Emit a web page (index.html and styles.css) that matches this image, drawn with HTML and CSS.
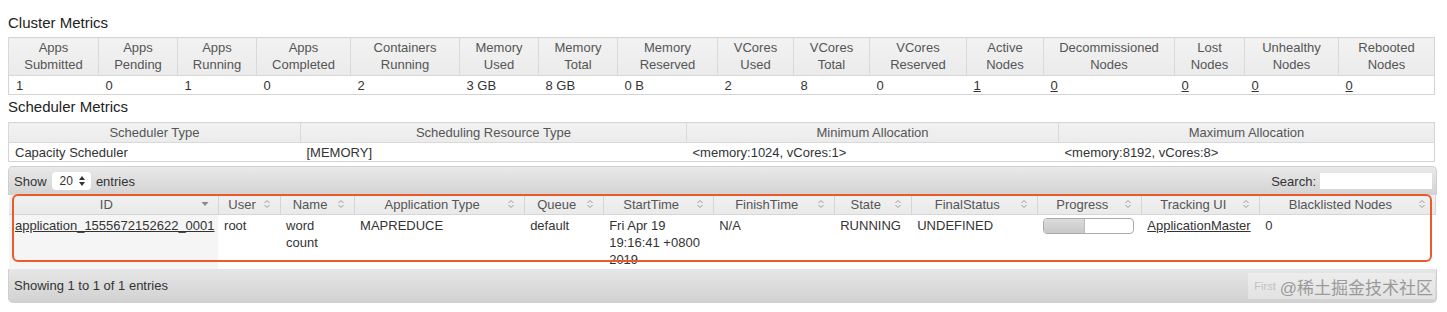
FILE: index.html
```html
<!DOCTYPE html>
<html lang="en">
<head>
<meta charset="UTF-8">
<title>All Applications</title>
<link rel="stylesheet" href="styles.css">
</head>
<body>
    <h3 class="section-title">Cluster Metrics</h3>
    <table class="metrics">
        <colgroup>
            <col style="width:90px"><col style="width:79px"><col style="width:79px"><col style="width:94px">
            <col style="width:109px"><col style="width:79px"><col style="width:79px"><col style="width:100px">
            <col style="width:76px"><col style="width:76px"><col style="width:97px"><col style="width:77px">
            <col style="width:131px"><col style="width:70px"><col style="width:94px"><col style="width:96px">
        </colgroup>
        <thead>
            <tr>
                <th>Apps Submitted</th><th>Apps Pending</th><th>Apps Running</th><th>Apps Completed</th>
                <th>Containers Running</th><th>Memory Used</th><th>Memory Total</th><th>Memory Reserved</th>
                <th>VCores Used</th><th>VCores Total</th><th>VCores Reserved</th><th>Active Nodes</th>
                <th>Decommissioned Nodes</th><th>Lost Nodes</th><th>Unhealthy Nodes</th><th>Rebooted Nodes</th>
            </tr>
        </thead>
        <tbody>
            <tr>
                <td>1</td><td>0</td><td>1</td><td>0</td><td>2</td><td>3 GB</td><td>8 GB</td><td>0 B</td>
                <td>2</td><td>8</td><td>0</td><td><a href="#">1</a></td><td><a href="#">0</a></td>
                <td><a href="#">0</a></td><td><a href="#">0</a></td><td><a href="#">0</a></td>
            </tr>
        </tbody>
    </table>

    <h3 class="section-title second">Scheduler Metrics</h3>
    <table class="metrics scheduler">
        <colgroup>
            <col style="width:292px"><col style="width:386px"><col style="width:372px"><col style="width:376px">
        </colgroup>
        <thead>
            <tr>
                <th>Scheduler Type</th><th>Scheduling Resource Type</th><th>Minimum Allocation</th><th>Maximum Allocation</th>
            </tr>
        </thead>
        <tbody>
            <tr>
                <td>Capacity Scheduler</td><td>[MEMORY]</td><td>&lt;memory:1024, vCores:1&gt;</td><td>&lt;memory:8192, vCores:8&gt;</td>
            </tr>
        </tbody>
    </table>

    <div class="apps-wrapper">
        <div class="dt-toolbar">
            <div class="dt-length">
                Show
                <span class="fake-select">20
                    <svg width="6" height="10" viewBox="0 0 6 10"><path d="M0 4 L3 0 L6 4 Z M0 6 L3 10 L6 6 Z" fill="#333"/></svg>
                </span>
                entries
            </div>
            <div class="dt-filter">Search: <span class="fake-input"></span></div>
        </div>

        <table class="apps">
            <colgroup>
                <col style="width:209px"><col style="width:62px"><col style="width:74px"><col style="width:170px">
                <col style="width:79px"><col style="width:110px"><col style="width:121px"><col style="width:77px">
                <col style="width:126px"><col style="width:104px"><col style="width:118px"><col style="width:176px">
            </colgroup>
            <thead>
                <tr>
                    <th class="sorted">ID<svg class="sort" width="8" height="10" viewBox="0 0 8 10"><path d="M0.5 3 L7.5 3 L4 7 Z" fill="#8a8a8a"/></svg></th>
                    <th>User<svg class="sort" width="8" height="10" viewBox="0 0 8 10"><path d="M1.5 4 L4 1.5 L6.5 4 M1.5 6 L4 8.5 L6.5 6" fill="none" stroke="#999" stroke-width="1"/></svg></th>
                    <th>Name<svg class="sort" width="8" height="10" viewBox="0 0 8 10"><path d="M1.5 4 L4 1.5 L6.5 4 M1.5 6 L4 8.5 L6.5 6" fill="none" stroke="#999" stroke-width="1"/></svg></th>
                    <th>Application Type<svg class="sort" width="8" height="10" viewBox="0 0 8 10"><path d="M1.5 4 L4 1.5 L6.5 4 M1.5 6 L4 8.5 L6.5 6" fill="none" stroke="#999" stroke-width="1"/></svg></th>
                    <th>Queue<svg class="sort" width="8" height="10" viewBox="0 0 8 10"><path d="M1.5 4 L4 1.5 L6.5 4 M1.5 6 L4 8.5 L6.5 6" fill="none" stroke="#999" stroke-width="1"/></svg></th>
                    <th>StartTime<svg class="sort" width="8" height="10" viewBox="0 0 8 10"><path d="M1.5 4 L4 1.5 L6.5 4 M1.5 6 L4 8.5 L6.5 6" fill="none" stroke="#999" stroke-width="1"/></svg></th>
                    <th>FinishTime<svg class="sort" width="8" height="10" viewBox="0 0 8 10"><path d="M1.5 4 L4 1.5 L6.5 4 M1.5 6 L4 8.5 L6.5 6" fill="none" stroke="#999" stroke-width="1"/></svg></th>
                    <th>State<svg class="sort" width="8" height="10" viewBox="0 0 8 10"><path d="M1.5 4 L4 1.5 L6.5 4 M1.5 6 L4 8.5 L6.5 6" fill="none" stroke="#999" stroke-width="1"/></svg></th>
                    <th>FinalStatus<svg class="sort" width="8" height="10" viewBox="0 0 8 10"><path d="M1.5 4 L4 1.5 L6.5 4 M1.5 6 L4 8.5 L6.5 6" fill="none" stroke="#999" stroke-width="1"/></svg></th>
                    <th>Progress<svg class="sort" width="8" height="10" viewBox="0 0 8 10"><path d="M1.5 4 L4 1.5 L6.5 4 M1.5 6 L4 8.5 L6.5 6" fill="none" stroke="#999" stroke-width="1"/></svg></th>
                    <th>Tracking UI<svg class="sort" width="8" height="10" viewBox="0 0 8 10"><path d="M1.5 4 L4 1.5 L6.5 4 M1.5 6 L4 8.5 L6.5 6" fill="none" stroke="#999" stroke-width="1"/></svg></th>
                    <th>Blacklisted Nodes<svg class="sort" width="8" height="10" viewBox="0 0 8 10"><path d="M1.5 4 L4 1.5 L6.5 4 M1.5 6 L4 8.5 L6.5 6" fill="none" stroke="#999" stroke-width="1"/></svg></th>
                </tr>
            </thead>
            <tbody>
                <tr>
                    <td class="sorted"><a href="#">application_1555672152622_0001</a></td>
                    <td>root</td>
                    <td>word count</td>
                    <td>MAPREDUCE</td>
                    <td>default</td>
                    <td>Fri Apr 19 19:16:41 +0800 2019</td>
                    <td>N/A</td>
                    <td>RUNNING</td>
                    <td>UNDEFINED</td>
                    <td><div class="progress"><div class="progress-fill" style="width:45%"></div></div></td>
                    <td><a href="#">ApplicationMaster</a></td>
                    <td>0</td>
                </tr>
            </tbody>
        </table>

        <div class="dt-footer">
            <span>Showing 1 to 1 of 1 entries</span>
        </div>

        <div class="highlight"></div>
        <div class="watermark"><span class="first">First</span>@稀土掘金技术社区</div>
    </div>
</body>
</html>
```

FILE: styles.css
```css
body {
    margin: 0;
    padding: 0 10px 0 8px;
    font-family: "Liberation Sans", Arial, "Noto Sans CJK SC", sans-serif;
    font-size: 13px;
    color: #333;
    background: #fff;
}

a {
    color: #333;
}

.section-title {
    font-size: 15px;
    font-weight: normal;
    line-height: 18px;
    margin: 14px 0 5px;
    color: #222;
}

.section-title.second {
    margin-top: 3px;
    margin-bottom: 6px;
}

table {
    border-collapse: collapse;
    table-layout: fixed;
    width: 1427px;
}

.metrics {
    border: 1px solid #d4d4d4;
}

.metrics th {
    background: linear-gradient(#f2f2f2, #ebebeb);
    color: #555;
    font-weight: normal;
    line-height: 17px;
    padding: 1px 4px 2px;
    border-left: 1px solid #d9d9d9;
    border-bottom: 1px solid #d9d9d9;
    text-align: center;
}

.metrics td {
    line-height: 17px;
    padding: 1px 7px 0;
    text-align: left;
    white-space: nowrap;
}

.scheduler th {
    padding: 1px 4px;
}

.scheduler td {
    padding: 1px 6px 0;
}

.apps-wrapper {
    position: relative;
    margin-top: 4px;
    width: 1429px;
}

.dt-toolbar {
    height: 28px;
    display: flex;
    align-items: center;
    justify-content: space-between;
    padding: 0 4px 0 5px;
    border: 1px solid #cfcfcf;
    border-bottom: none;
    border-radius: 5px 5px 0 0;
    background: linear-gradient(#e9e9e9, #d3d3d3);
    color: #333;
}

.dt-length {
    display: flex;
    align-items: center;
    gap: 5px;
}

.fake-select {
    display: inline-flex;
    align-items: center;
    gap: 6px;
    background: #fff;
    border-radius: 4px;
    height: 18px;
    padding: 0 6px 0 8px;
    font-size: 12px;
}

.dt-filter {
    display: flex;
    align-items: center;
    gap: 4px;
}

.fake-input {
    display: inline-block;
    width: 112px;
    height: 16px;
    background: #fff;
}

.apps {
    margin-left: 1px;
}

.apps th {
    position: relative;
    background: linear-gradient(#f1f1f1, #e9e9e9);
    color: #555;
    font-weight: normal;
    line-height: 17px;
    padding: 1px 20px 1px 6px;
    border-right: 1px solid #d6d6d6;
    border-bottom: 1px solid #d6d6d6;
    text-align: center;
    white-space: nowrap;
}

.apps th .sort {
    position: absolute;
    right: 9px;
    top: 4px;
}

.apps td {
    vertical-align: top;
    line-height: 17px;
    padding: 2px 8px 1px 6px;
    text-align: left;
    background: #fff;
}

.apps td.sorted {
    background: #f5f5f5;
}

.progress {
    width: 89px;
    height: 14px;
    margin-top: 1px;
    border: 1px solid #aaa;
    border-radius: 4px;
    background: #fff;
    overflow: hidden;
}

.progress-fill {
    height: 100%;
    background: linear-gradient(#dcdcdc, #c8c8c8);
    border-right: 1px solid #bbb;
}

.dt-footer {
    height: 33px;
    display: flex;
    align-items: center;
    padding: 0 5px;
    border: 1px solid #cfcfcf;
    border-top: none;
    border-radius: 0 0 5px 5px;
    background: linear-gradient(#e6e6e6, #d2d2d2);
    color: #333;
}

.highlight {
    position: absolute;
    left: 4px;
    top: 28px;
    width: 1416px;
    height: 64px;
    border: 2px solid #ec5a2b;
    border-radius: 6px;
    pointer-events: none;
}

.watermark {
    position: absolute;
    right: 2px;
    bottom: 4px;
    height: 26px;
    display: flex;
    align-items: center;
    padding: 0 2px 0 6px;
    background: rgba(255, 255, 255, 0.35);
    color: #9a9a9a;
    font-size: 17px;
}

.watermark .first {
    font-size: 11px;
    color: #c2c2c2;
    margin-right: 4px;
}
```
